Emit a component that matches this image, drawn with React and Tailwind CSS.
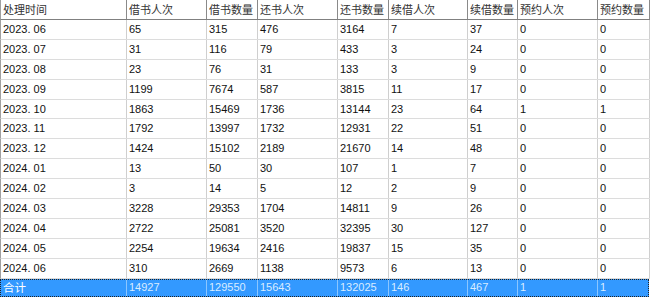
import React from "react";

const headers = ["处理时间", "借书人次", "借书数量", "还书人次", "还书数量", "续借人次", "续借数量", "预约人次", "预约数量"];

const rows = [
  ["2023.06", "65", "315", "476", "3164", "7", "37", "0", "0"],
  ["2023.07", "31", "116", "79", "433", "3", "24", "0", "0"],
  ["2023.08", "23", "76", "31", "133", "3", "9", "0", "0"],
  ["2023.09", "1199", "7674", "587", "3815", "11", "17", "0", "0"],
  ["2023.10", "1863", "15469", "1736", "13144", "23", "64", "1", "1"],
  ["2023.11", "1792", "13997", "1732", "12931", "22", "51", "0", "0"],
  ["2023.12", "1424", "15102", "2189", "21670", "14", "48", "0", "0"],
  ["2024.01", "13", "50", "30", "107", "1", "7", "0", "0"],
  ["2024.02", "3", "14", "5", "12", "2", "9", "0", "0"],
  ["2024.03", "3228", "29353", "1704", "14811", "9", "26", "0", "0"],
  ["2024.04", "2722", "25081", "3520", "32395", "30", "127", "0", "0"],
  ["2024.05", "2254", "19634", "2416", "19837", "15", "35", "0", "0"],
  ["2024.06", "310", "2669", "1138", "9573", "6", "13", "0", "0"],
];

const total = ["合计", "14927", "129550", "15643", "132025", "146", "467", "1", "1"];

const cols = "grid grid-cols-[126px_80px_51px_80px_51px_79px_50px_80px_1fr]";
const cjk = { fontFamily: "'Noto Sans CJK SC', sans-serif" };

export default function App() {
  return (
    <div className="w-[650px] h-[297px] bg-white overflow-hidden text-black" style={{ fontFamily: "'Liberation Sans', 'Noto Sans CJK SC', sans-serif" }}>
      <div className={`${cols} h-[20px] border-b border-[#808080] border-l border-l-[#a0a0a0]`}>
        {headers.map((h, i) => (
          <div key={i} className="border-r border-[#8a8a8a] pl-[2px] text-[11px] leading-[19px] text-[#333] overflow-hidden whitespace-nowrap" style={cjk}>
            {h}
          </div>
        ))}
      </div>
      {rows.map((r, ri) => (
        <div key={ri} className={`${cols} h-[19.9px] border-b border-[#dcdcdc] border-l border-l-[#a0a0a0]`}>
          {r.map((c, ci) => (
            <div key={ci} className="border-r border-[#cfcfcf] pl-[2px] text-[11px] leading-[18.9px] text-[#111] overflow-hidden whitespace-nowrap">
              {ci === 0 ? c.replace(".", ". ") : c}
            </div>
          ))}
        </div>
      ))}
      <div className={`${cols} h-[18px] bg-[#3399ff] border border-dotted border-[#222] w-[649px]`}>
        {total.map((c, ci) => (
          <div
            key={ci}
            className={`${ci < 8 ? "border-r border-[#8cc6ff]" : ""} pl-[2px] leading-[15px] overflow-hidden whitespace-nowrap ${ci === 0 ? "text-white text-[11.5px]" : "text-[#d9ecff] text-[11px]"}`}
            style={ci === 0 ? cjk : undefined}
          >
            {c}
          </div>
        ))}
      </div>
    </div>
  );
}
